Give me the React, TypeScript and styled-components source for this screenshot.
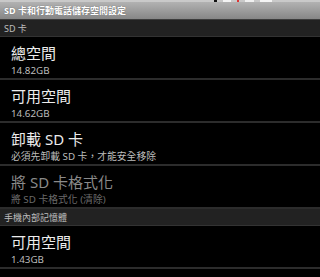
import React from "react";
import styled, { createGlobalStyle } from "styled-components";

const GlobalStyle = createGlobalStyle`
    html, body {
        margin: 0;
        padding: 0;
        background: #000;
    }
    body {
        font-family: "Noto Sans", "Noto Sans CJK TC", sans-serif;
        width: 320px;
        height: 277px;
        overflow: hidden;
    }
`;

const StatusStrip = styled.div`
    height: 2px;
    background: #c9c9c9;
    display: flex;
    align-items: stretch;
    padding-left: 214px;
    gap: 6px;
`;

const StatusMark = styled.span<{ $w: number; $color: string }>`
    width: ${(p) => p.$w}px;
    background: ${(p) => p.$color};
`;

const TitleBar = styled.div`
    height: 17px;
    background: linear-gradient(#b2b2b2, #868686);
    border-bottom: 1px solid #3c3c3c;
    display: flex;
    align-items: center;
    padding-left: 4px;
    color: #fff;
    font-size: 9px;
    font-weight: bold;
    text-shadow: 0 0 1px #555;
`;

const SectionHeader = styled.div`
    height: 16px;
    background: #222;
    border-bottom: 1px solid #333;
    display: flex;
    align-items: center;
    padding-left: 4px;
    color: #bdbdbd;
    font-size: 9px;
`;

const Item = styled.div`
    height: 41px;
    padding-left: 11px;
    border-bottom: 2px solid #2c2c2c;
    display: flex;
    flex-direction: column;
`;

const ItemTitle = styled.div<{ $disabled?: boolean }>`
    font-size: 15px;
    line-height: 18px;
    margin-top: 7px;
    color: ${(p) => (p.$disabled ? "#8a8a8a" : "#ececec")};
`;

const ItemSummary = styled.div<{ $disabled?: boolean }>`
    font-size: 9.8px;
    line-height: 12px;
    margin-top: 3px;
    color: ${(p) => (p.$disabled ? "#6a6a6a" : "#bcbcbc")};
`;

type Pref = { title: string; summary: string; disabled?: boolean };

const sdPrefs: Pref[] = [
    { title: "總空間", summary: "14.82GB" },
    { title: "可用空間", summary: "14.62GB" },
    { title: "卸載 SD 卡", summary: "必須先卸載 SD 卡，才能安全移除" },
    { title: "將 SD 卡格式化", summary: "將 SD 卡格式化 (清除)", disabled: true },
];

const phonePrefs: Pref[] = [{ title: "可用空間", summary: "1.43GB" }];

function PrefItem({ pref }: { pref: Pref }) {
    return (
        <Item>
            <ItemTitle $disabled={pref.disabled}>{pref.title}</ItemTitle>
            <ItemSummary $disabled={pref.disabled}>{pref.summary}</ItemSummary>
        </Item>
    );
}

export default function App() {
    return (
        <>
            <GlobalStyle />
            <StatusStrip>
                <StatusMark $w={3} $color="#111" />
                <StatusMark $w={8} $color="#f4f4f4" />
                <StatusMark $w={2} $color="#d33" />
                <StatusMark $w={9} $color="#f0f0f0" />
                <StatusMark $w={12} $color="#f4f4f4" />
            </StatusStrip>
            <TitleBar>SD 卡和行動電話儲存空間設定</TitleBar>
            <SectionHeader>SD 卡</SectionHeader>
            {sdPrefs.map((p, i) => (
                <PrefItem key={i} pref={p} />
            ))}
            <SectionHeader>手機內部記憶體</SectionHeader>
            {phonePrefs.map((p, i) => (
                <PrefItem key={i} pref={p} />
            ))}
        </>
    );
}
